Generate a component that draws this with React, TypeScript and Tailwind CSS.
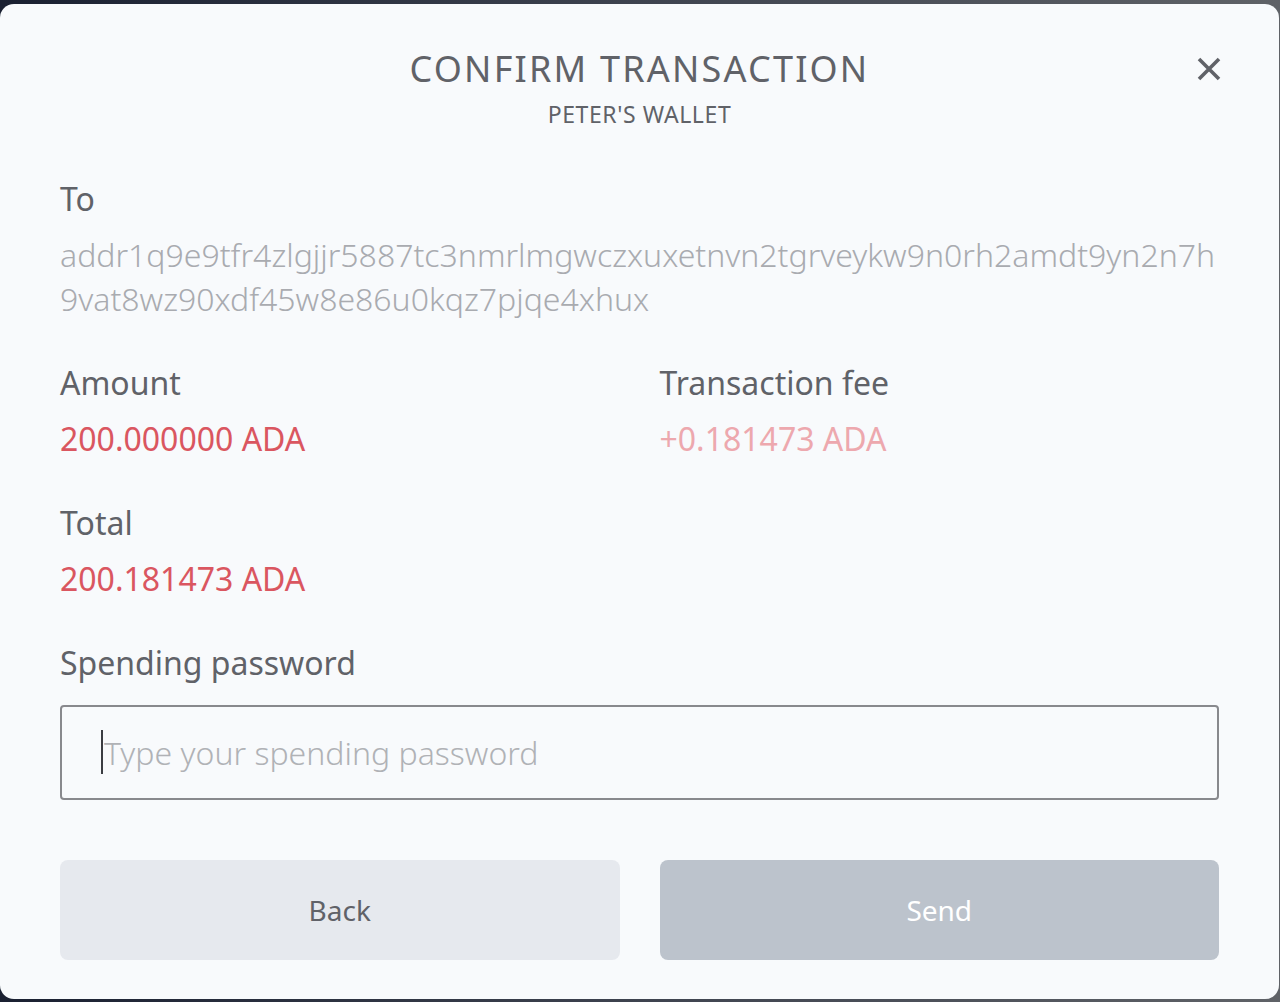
import { useState } from "react";

const address = [
  "addr1q9e9tfr4zlgjjr5887tc3nmrlmgwczxuxetnvn2tgrveykw9n0rh2amdt9yn2n7h",
  "9vat8wz90xdf45w8e86u0kqz7pjqe4xhux"
];

function Label({ children, className = "" }: { children: React.ReactNode; className?: string }) {
  return <div className={`text-[32px] leading-[44px] text-[#606268] ${className}`}>{children}</div>;
}

function Value({ children, muted }: { children: React.ReactNode; muted?: boolean }) {
  return (
    <div className={`mt-[12px] text-[32px] leading-[44px] ${muted ? "text-[#eda8ae]" : "text-[#da5660]"}`}>
      {children}
    </div>
  );
}

export default function App() {
  const [password, setPassword] = useState("");

  return (
    <div
      className="min-h-[1002px] w-full bg-gradient-to-r from-[#1a2031] via-[#3e434f] to-[#5f6267] pt-[4px] pb-[3px] pr-[1px]"
      style={{ fontFamily: '"Noto Sans", "Open Sans", sans-serif' }}
    >
      <div className="relative h-[995px] rounded-[14px] bg-[#f8fafc] px-[60px] pt-[41px]">
        <button
          type="button"
          className="absolute right-[57px] top-[52px] flex h-[26px] w-[26px] items-center justify-center text-[#606268]"
        >
          <svg width="24" height="24" viewBox="0 0 24 24" fill="none">
            <path d="M2 2 L22 22 M22 2 L2 22" stroke="currentColor" strokeWidth="3.6" />
          </svg>
        </button>

        <h1 className="text-center text-[36px] leading-[48px] tracking-[2.2px] text-[#606268]">
          CONFIRM TRANSACTION
        </h1>
        <p className="mt-[5px] text-center text-[23px] leading-[32px] tracking-[0.6px] text-[#606268]">
          PETER'S WALLET
        </p>

        <Label className="mt-[47px]">To</Label>
        <div className="mt-[12px] text-[32px] font-light leading-[44px] text-[#a9abb0]">
          {address.map((line) => (
            <div key={line} className="whitespace-nowrap">
              {line}
            </div>
          ))}
        </div>

        <div className="mt-[40px] grid grid-cols-2 gap-x-[40px]">
          <div>
            <Label>Amount</Label>
            <Value>200.000000 ADA</Value>
          </div>
          <div>
            <Label>Transaction fee</Label>
            <Value muted>+0.181473 ADA</Value>
          </div>
        </div>

        <div className="mt-[40px]">
          <Label>Total</Label>
          <Value>200.181473 ADA</Value>
        </div>

        <Label className="mt-[40px]">Spending password</Label>
        <div className="relative mt-[20px]">
          <input
            type="password"
            value={password}
            onChange={(event) => setPassword(event.target.value)}
            placeholder="Type your spending password"
            className="h-[95px] w-full rounded-[4px] border-2 border-[#88898d] bg-[#f8fafc] pl-[42px] text-[32px] font-light text-[#606268] outline-none placeholder:text-[#b0b2b6]"
          />
          <span className="absolute left-[41px] top-[25px] h-[44px] w-[2px] bg-[#3b3d42]" />
        </div>

        <div className="mt-[60px] grid grid-cols-2 gap-x-[40px]">
          <button
            type="button"
            className="h-[100px] rounded-[8px] bg-[#e6e9ee] text-[28px] text-[#606268]"
          >
            Back
          </button>
          <button
            type="button"
            className="h-[100px] rounded-[8px] bg-[#bcc3cc] text-[28px] text-white"
          >
            Send
          </button>
        </div>
      </div>
    </div>
  );
}
